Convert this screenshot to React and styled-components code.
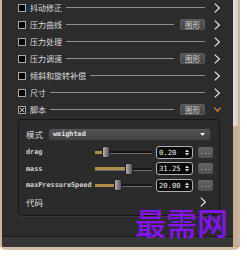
import React from 'react';
import styled, { createGlobalStyle } from 'styled-components';

const Global = createGlobalStyle`
  html, body { margin: 0; padding: 0; background: #ffffff; }
  body { width: 247px; height: 256px; overflow: hidden; }
`;

const CJK = `"Noto Sans CJK SC", "Noto Sans", sans-serif`;
const MONO = `"DejaVu Sans Mono", "Liberation Mono", monospace`;

const Frame = styled.div`
  position: relative;
  width: 240px;
  height: 250px;
  box-sizing: border-box;
  border-left: 2px solid #cdb59b;
  border-right: 2px solid #cdb59b;
  border-bottom: 3px solid #d6c0a7;
  border-radius: 0 0 5px 5px;
  background: #2c2c2c;
  display: flex;
  overflow: hidden;
`;

const Main = styled.div`
  flex: 1;
  display: flex;
  flex-direction: column;
  min-width: 0;
`;

const Content = styled.div`
  flex: 1;
  padding: 0 12px 0 16px;
  margin-top: -1px;
`;

const BottomBar = styled.div`
  height: 10px;
  border-top: 1px solid #1b1b1b;
  background: #363636;
`;

const ScrollTrack = styled.div`
  width: 5px;
  background: #c7b097;
  display: flex;
  flex-direction: column;
`;

const ScrollThumb = styled.div`
  height: 126px;
  background: linear-gradient(90deg, #e6e2de, #d2ccc6);
`;

const Row = styled.div`
  height: 17px;
  display: flex;
  align-items: center;
`;

const Check = styled.span`
  width: 8px;
  height: 8px;
  box-sizing: border-box;
  border: 1px solid #a9a9a9;
  background: #050505;
  margin-right: 4px;
  display: flex;
  align-items: center;
  justify-content: center;
  flex: none;
`;

const Label = styled.span`
  font-family: ${CJK};
  font-size: 8px;
  line-height: 1;
  color: #dcdcdc;
  white-space: nowrap;
`;

const Line = styled.span`
  flex: 1;
  height: 1px;
  background: #8e8e8e;
  margin: 0 ${p => (p.$beforeBtn ? 6 : 9)}px 0 4px;
`;

const GraphBtn = styled.span`
  width: 25px;
  height: 11px;
  box-sizing: border-box;
  border: 1px solid #5e5e5e;
  border-radius: 2px;
  background: linear-gradient(#575757, #444444);
  color: #d8d8d8;
  font-family: ${CJK};
  font-size: 7.5px;
  line-height: 9px;
  text-align: center;
  margin-right: 9px;
  flex: none;
`;

const ArrowSlot = styled.span`
  width: 7px;
  display: flex;
  align-items: center;
  flex: none;
`;

const ScriptBox = styled.div`
  margin: 1px 1px 0 0;
  height: 97px;
  box-sizing: border-box;
  border: 1px solid #171717;
  border-radius: 3px;
  box-shadow: 0 1px 0 #3a3a3a;
  background: #2b2b2b;
  padding: 7px 8px 0 7px;
  display: flex;
  flex-direction: column;
`;

const ModeRow = styled.div`
  height: 14px;
  display: flex;
  align-items: center;
  margin-bottom: 4px;
`;

const ModeLabel = styled(Label)`
  width: 22px;
  font-size: 8.5px;
`;

const Select = styled.div`
  flex: 1;
  height: 13px;
  box-sizing: border-box;
  border-radius: 3px;
  background: linear-gradient(#525252, #444444);
  border: 1px solid #303030;
  display: flex;
  align-items: center;
  justify-content: space-between;
  padding: 0 5px 0 4px;
  font-family: ${MONO};
  font-size: 6.8px;
  font-weight: bold;
  color: #e4e4e4;
`;

const ParamRow = styled.div`
  height: 14px;
  display: flex;
  align-items: center;
  margin-bottom: 2.5px;
`;

const ParamLabel = styled.span`
  width: 69px;
  flex: none;
  font-family: ${MONO};
  font-size: 6.8px;
  font-weight: bold;
  color: #d2d2d2;
  white-space: nowrap;
`;

const Slider = styled.div`
  position: relative;
  width: 57px;
  height: 12px;
  margin-right: 4px;
  flex: none;
`;

const Track = styled.div`
  position: absolute;
  left: 0;
  right: 0;
  top: 5px;
  height: 2px;
  background: #161616;
  border-bottom: 1px solid #6c6c6c;
`;

const Fill = styled.div`
  position: absolute;
  left: 0;
  top: 4.5px;
  height: 3px;
  background: #b08d48;
`;

const Thumb = styled.div`
  position: absolute;
  top: 0;
  width: 8px;
  height: 12px;
  box-sizing: border-box;
  border: 1px solid #202020;
  border-radius: 2px;
  background: linear-gradient(90deg, #b4b4b4, #7a7a7a 60%, #5a5a5a);
`;

const Spin = styled.div`
  width: 37px;
  height: 13px;
  box-sizing: border-box;
  border: 1px solid #b0b0b0;
  border-radius: 3px;
  background: #0b0b0b;
  display: flex;
  align-items: center;
  justify-content: space-between;
  padding: 0 3px 0 2px;
  font-family: ${MONO};
  font-size: 7.2px;
  color: #ececec;
  flex: none;
`;

const MoreBtn = styled.span`
  margin-left: 5px;
  width: 15px;
  height: 11px;
  border-radius: 2px;
  background: linear-gradient(#646464, #505050);
  color: #cfcfcf;
  font-family: ${MONO};
  font-size: 6px;
  line-height: 9px;
  text-align: center;
  flex: none;
`;

const CodeRow = styled.div`
  height: 14px;
  margin-top: 0.5px;
  display: flex;
  align-items: center;
  justify-content: space-between;
  padding-right: 5px;
`;

const Watermark = styled.div`
  position: absolute;
  left: 133px;
  top: 206px;
  font-family: ${CJK};
  font-weight: 500;
  font-size: 31px;
  line-height: 1;
  color: #8412f4;
  letter-spacing: 0px;
  pointer-events: none;
`;

const ChevronRight = () => (
  <svg width="6" height="10" viewBox="0 0 6 10">
    <polyline points="0.7,0.6 5.3,5 0.7,9.4" fill="none" stroke="#e2e2e2" strokeWidth="1.2" />
  </svg>
);

const ChevronDown = () => (
  <svg width="7" height="5" viewBox="0 0 7 5">
    <polyline points="0.5,0.6 3.5,4.2 6.5,0.6" fill="none" stroke="#d48a2c" strokeWidth="1.3" />
  </svg>
);

const XMark = () => (
  <svg width="6" height="6" viewBox="0 0 6 6">
    <path d="M0.8 0.8 L5.2 5.2 M5.2 0.8 L0.8 5.2" stroke="#bdbdbd" strokeWidth="1.1" />
  </svg>
);

const SpinArrows = () => (
  <svg width="4" height="7" viewBox="0 0 4 7">
    <path d="M0 3 L2 0.5 L4 3 Z M0 4 L2 6.5 L4 4 Z" fill="#e0e0e0" />
  </svg>
);

const items = [
  { label: '抖动修正' },
  { label: '压力曲线', btn: true },
  { label: '压力处理' },
  { label: '压力调速', btn: true },
  { label: '倾斜和旋转补偿' },
  { label: '尺寸' },
];

const params = [
  { name: 'drag', value: '0.20', pos: 7 },
  { name: 'mass', value: '31.25', pos: 30 },
  { name: 'maxPressureSpeed', value: '20.00', pos: 19 },
];

export default function App() {
  return (
    <>
      <Global />
      <Frame>
        <Main>
          <Content>
            {items.map(it => (
              <Row key={it.label}>
                <Check />
                <Label>{it.label}</Label>
                <Line $beforeBtn={it.btn} />
                {it.btn && <GraphBtn>图形</GraphBtn>}
                <ArrowSlot><ChevronRight /></ArrowSlot>
              </Row>
            ))}
            <Row>
              <Check><XMark /></Check>
              <Label>脚本</Label>
              <Line $beforeBtn />
              <GraphBtn>图形</GraphBtn>
              <ArrowSlot><ChevronDown /></ArrowSlot>
            </Row>
            <ScriptBox>
              <ModeRow>
                <ModeLabel>模式</ModeLabel>
                <Select>
                  <span>weighted</span>
                  <svg width="5" height="3" viewBox="0 0 5 3"><path d="M0 0 H5 L2.5 3 Z" fill="#f0f0f0" /></svg>
                </Select>
              </ModeRow>
              {params.map(p => (
                <ParamRow key={p.name}>
                  <ParamLabel>{p.name}</ParamLabel>
                  <Slider>
                    <Track />
                    <Fill style={{ width: p.pos + 'px' }} />
                    <Thumb style={{ left: p.pos + 'px' }} />
                  </Slider>
                  <Spin>
                    <span>{p.value}</span>
                    <SpinArrows />
                  </Spin>
                  <MoreBtn>...</MoreBtn>
                </ParamRow>
              ))}
              <CodeRow>
                <ModeLabel>代码</ModeLabel>
                <ChevronRight />
              </CodeRow>
            </ScriptBox>
          </Content>
          <BottomBar />
        </Main>
        <ScrollTrack>
          <ScrollThumb />
        </ScrollTrack>
        <Watermark>最需网</Watermark>
      </Frame>
    </>
  );
}
